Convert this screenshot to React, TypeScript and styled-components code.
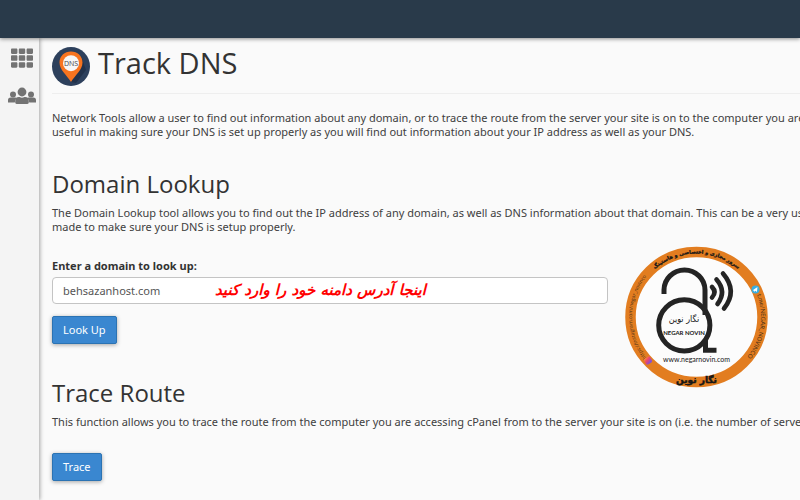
import React from "react";
import styled, { createGlobalStyle } from "styled-components";
import { FaTh } from "react-icons/fa";

const GlobalStyle = createGlobalStyle`
  *, *::before, *::after { box-sizing: border-box; }
  body {
    margin: 0;
    overflow: hidden;
    background: #fafafa;
    color: #333;
    font: 11px/14px "Noto Sans", "Open Sans", sans-serif;
  }
`;

const Page = styled.div`
  display: flex;
  flex-direction: column;
  min-height: 100vh;
`;

const TopBar = styled.header`
  height: 38px;
  flex: none;
  background: #293a4a;
  box-shadow: 0 1px 4px rgba(0, 0, 0, 0.45);
  z-index: 1;
`;

const Body = styled.div`
  display: flex;
  flex: 1;
`;

const Sidebar = styled.nav`
  display: flex;
  flex-direction: column;
  align-items: center;
  gap: 18px;
  flex: none;
  width: 39px;
  padding: 9px 0 0 4px;
  background: #f4f4f4;
  box-shadow: 1px 0 4px rgba(0, 0, 0, 0.35);
`;

const NavLink = styled.a`
  display: flex;
  color: #737373;
`;

const Content = styled.main`
  position: relative;
  flex: 1;
  min-width: 0;
  padding: 8px 0 16px 13px;
`;

const TitleRow = styled.div`
  display: flex;
  align-items: center;
  gap: 8px;
  height: 48px;
  padding-bottom: 6px;
  border-bottom: 1px solid #eee;
`;

const Title = styled.h1`
  margin: 0;
  font-family: "Open Sans", sans-serif;
  font-size: 29px;
  line-height: 32px;
  font-weight: 400;
  padding-bottom: 8px;
`;

const Section = styled.section`
  margin-top: 32px;

  & + & {
    margin-top: 35px;
  }
`;

const Heading = styled.h2`
  margin: 0 0 8px;
  font-family: "Open Sans", sans-serif;
  font-size: 24px;
  line-height: 28px;
  font-weight: 400;
`;

const Copy = styled.p`
  margin: 0;
  color: #404040;
  white-space: nowrap;
`;

const Intro = styled(Copy)`
  margin-top: 17px;
  margin-bottom: -1px;
`;

const Form = styled.form`
  display: flex;
  flex-direction: column;
  align-items: flex-start;
  margin-top: 24px;
`;

const Label = styled.label`
  font-weight: 700;
  margin: 1px 0 4px;
`;

const Field = styled.div`
  position: relative;
  width: calc(75% - 5px);
  margin-bottom: 12px;
`;

const DomainInput = styled.input`
  display: block;
  width: 100%;
  height: 27px;
  padding: 0 10px;
  border: 1px solid #c4c4c4;
  border-radius: 4px;
  background: #fff;
  color: #555;
  font: inherit;
`;

const Note = styled.span`
  position: absolute;
  top: 3px;
  left: 163px;
  color: #f00;
  font: italic 700 15px/20px "DejaVu Sans", sans-serif;
  white-space: nowrap;
  pointer-events: none;
`;

const Button = styled.button`
  height: 28px;
  padding: 0 10px;
  border: 1px solid #2b73b3;
  border-radius: 2px;
  background: #3a87d0;
  color: #fff;
  font: inherit;
  box-shadow: 0 1px 4px rgba(0, 0, 0, 0.35);
`;

const Stamp = styled.svg`
  position: absolute;
  left: 586px;
  top: 208px;
`;

function UsersIcon() {
  return (
    <svg width="28" height="18" viewBox="0 0 28 18" fill="currentColor" aria-hidden="true">
      <circle cx="5" cy="7.4" r="3" />
      <circle cx="23" cy="7.4" r="3" />
      <path d="M0 15.5v-2.3Q0 10.4 2.7 10.4h4.7q1.1 0 1.4.5-2 1.5-2 4.6z" />
      <path d="M28 15.5v-2.3q0-2.8-2.7-2.8h-4.7q-1.1 0-1.4.5 2 1.5 2 4.6z" />
      <circle cx="14" cy="5" r="4.4" />
      <path d="M7.2 14.3q0-4.2 3.6-4.2h.8q2.4 1.2 4.8 0h.8q3.6 0 3.6 4.2v1.3q0 1.4-1.4 1.4H8.6q-1.4 0-1.4-1.4z" />
    </svg>
  );
}

function DnsIcon() {
  return (
    <svg width="38" height="39" viewBox="0 0 38 39" aria-hidden="true">
      <ellipse cx="19" cy="19.5" rx="19" ry="19.5" fill="#2d405c" />
      <path d="M29 9l5 14-10 13-5-1z" fill="#22324b" />
      <path d="M19 4.6c-6.4 0-11.5 4.6-11.5 11 0 7.4 7.5 12.8 11.5 19.4 4-6.6 11.5-12 11.5-19.4 0-6.4-5.1-11-11.5-11z" fill="#f8741f" />
      <circle cx="19" cy="16.2" r="8" fill="#f7f7f7" />
      <text x="19" y="18.5" textAnchor="middle" fontFamily="Open Sans, sans-serif" fontSize="7" fill="#444">DNS</text>
    </svg>
  );
}

function NegarNovinStamp() {
  return (
    <Stamp width="144" height="142" viewBox="0 0 144 142" role="img" aria-label="Negar Novin">
      <defs>
        <path id="ring-top" d="M8 71a63.5 63.5 0 0 1 127 0" />
        <path id="ring-left" d="M71.5 135.5a64.5 64.5 0 0 1 0-129" />
        <path id="ring-right" d="M71.5 6.5a64.5 64.5 0 0 1 0 129" />
        <linearGradient id="insta" x1="0" y1="0" x2="0.4" y2="1">
          <stop offset="0" stopColor="#fa9b35" />
          <stop offset="0.5" stopColor="#ee4668" />
          <stop offset="1" stopColor="#8050d8" />
        </linearGradient>
      </defs>
      <ellipse cx="71.5" cy="71" rx="66" ry="65" fill="#fcfcfc" stroke="#e27d20" strokeWidth="10.5" />
      <g fill="none" stroke="#242424" strokeWidth="5">
        <path d="M39 48v-4a20.5 20 0 0 1 41 0v25" />
        <circle cx="59.3" cy="79.3" r="25.6" />
        <path d="M80.5 94v10.3h11" />
        <g strokeLinecap="round" strokeWidth="4.6">
          <path d="M87 41q5 5 0 10.5" />
          <path d="M91.5 33.5q10.500 12 1 24.500" />
          <path d="M98 27.5q15 17.5 1 35" />
        </g>
      </g>
      <g fill="#171717" textAnchor="middle">
        <text x="59" y="76" fontFamily="DejaVu Sans Condensed, DejaVu Sans, sans-serif" fontSize="9">نگار نوین</text>
        <text x="59" y="89" fontFamily="Lato, sans-serif" fontWeight="700" fontSize="6">NEGAR NOVIN</text>
        <text x="71.5" y="116" fontFamily="Lato, sans-serif" fontSize="7">www.negarnovin.com</text>
        <text x="71.5" y="137" fontFamily="DejaVu Sans, sans-serif" fontWeight="700" fontSize="9" stroke="#171717" strokeWidth="0.5">نگار نوین</text>
        <text fontFamily="DejaVu Sans, sans-serif" fontWeight="700" fontSize="5" stroke="#171717" strokeWidth="0.3">
          <textPath href="#ring-top" startOffset="50%">سرور مجازی و اختصاصی و هاستینگ</textPath>
        </text>
        <text fontFamily="Open Sans, sans-serif" fontSize="5" fill="#4a3018">
          <textPath href="#ring-left" startOffset="50%">https://instagram.com/negar_novinco</textPath>
        </text>
        <text fontFamily="Lato, sans-serif" fontSize="6" fill="#4a3018">
          <textPath href="#ring-right" startOffset="55%">t.me/NEGAR_NOVINCO</textPath>
        </text>
      </g>
      <circle cx="130.5" cy="43.5" r="4" fill="#38afe3" />
      <path d="M128 44l4.5-3-.6 5-1.500-1.300-1 1z" fill="#fff" />
      <rect x="19.5" y="111" width="7" height="7" rx="2" fill="url(#insta)" transform="rotate(-30 23 114.5)" />
    </Stamp>
  );
}

export default function App() {
  return (
    <Page>
      <GlobalStyle />
      <TopBar />
      <Body>
        <Sidebar>
          <NavLink href="#home" aria-label="Home">
            <FaTh size={22} />
          </NavLink>
          <NavLink href="#users" aria-label="User manager">
            <UsersIcon />
          </NavLink>
        </Sidebar>
        <Content>
          <TitleRow>
            <DnsIcon />
            <Title>Track DNS</Title>
          </TitleRow>
          <Intro>
            Network Tools allow a user to find out information about any domain, or to trace the route from the server your site is on to the computer you are
            <br />
            useful in making sure your DNS is set up properly as you will find out information about your IP address as well as your DNS.
          </Intro>
          <Section>
            <Heading>Domain Lookup</Heading>
            <Copy>
              The Domain Lookup tool allows you to find out the IP address of any domain, as well as DNS information about that domain. This can be a very useful
              <br />
              made to make sure your DNS is setup properly.
            </Copy>
            <Form onSubmit={(event: React.FormEvent) => event.preventDefault()}>
              <Label htmlFor="domain">Enter a domain to look up:</Label>
              <Field>
                <DomainInput id="domain" defaultValue="behsazanhost.com" />
                <Note dir="rtl">اینجا آدرس دامنه خود را وارد کنید</Note>
              </Field>
              <Button type="submit">Look Up</Button>
            </Form>
          </Section>
          <Section>
            <Heading>Trace Route</Heading>
            <Copy>
              This function allows you to trace the route from the computer you are accessing cPanel from to the server your site is on (i.e. the number of servers
            </Copy>
            <Form onSubmit={(event: React.FormEvent) => event.preventDefault()}>
              <Button type="submit">Trace</Button>
            </Form>
          </Section>
          <NegarNovinStamp />
        </Content>
      </Body>
    </Page>
  );
}
